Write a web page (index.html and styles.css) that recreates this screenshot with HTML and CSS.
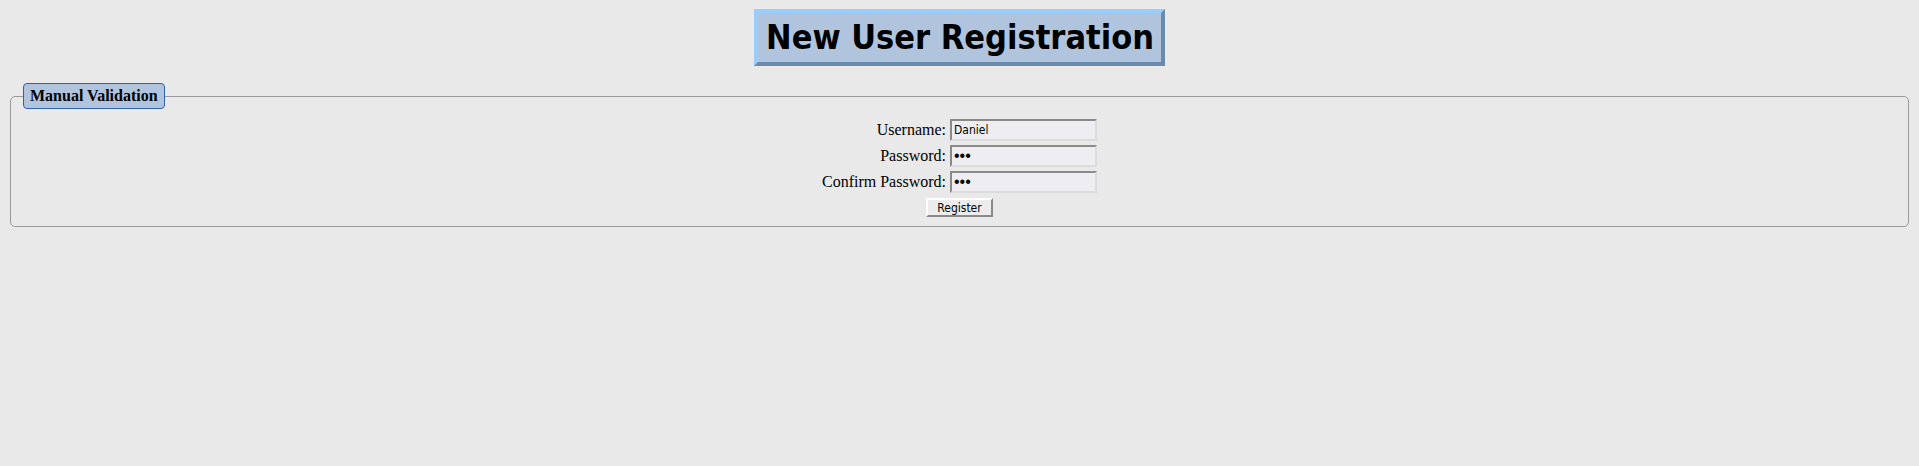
FILE: index.html
```html
<!DOCTYPE html>
<html>
<head>
<meta charset="utf-8">
<title>New User Registration</title>
<link rel="stylesheet" href="styles.css">
</head>
<body>
<div class="title-wrap">
  <h1 class="title">New User Registration</h1>
</div>
<fieldset class="panel">
  <legend class="panel-legend">Manual Validation</legend>
  <table class="form-table">
    <tr>
      <td class="label">Username:</td>
      <td><input class="field" type="text" value="Daniel"></td>
    </tr>
    <tr>
      <td class="label">Password:</td>
      <td><input class="field field-pw" type="password" value="abc"></td>
    </tr>
    <tr>
      <td class="label">Confirm Password:</td>
      <td><input class="field field-pw" type="password" value="abc"></td>
    </tr>
  </table>
  <div class="actions">
    <button class="btn" type="button">Register</button>
  </div>
</fieldset>
</body>
</html>
```

FILE: styles.css
```css
html, body {
  background: #e9e9e9;
}
body {
  margin: 8px;
  font-family: "Liberation Serif", "Times New Roman", serif;
  font-size: 16px;
  color: #000;
}
.title-wrap {
  text-align: center;
  padding-top: 1px;
  margin-bottom: 17px;
}
.title {
  display: inline-block;
  margin: 0;
  padding: 3px 7px 4px 8px;
  background: #b0c4de;
  border-style: solid;
  border-width: 4px;
  border-color: #99ccff #6b8bad #6b8bad #99ccff;
  font-family: "DejaVu Sans Condensed", "DejaVu Sans", sans-serif;
  font-stretch: condensed;
  font-weight: bold;
  font-size: 34px;
  line-height: 42px;
  letter-spacing: 0;
}
.panel {
  margin: 0 2px;
  border: 1px solid #9a9a9a;
  border-radius: 5px;
  padding: 1px 10px 9px;
}
.panel-legend {
  background: #b0c4de;
  border: 1px solid #3060b8;
  border-radius: 4px;
  padding: 3px 6px 3px 6px;
  margin-left: 2px;
  font-weight: bold;
  font-size: 16px;
  line-height: 18px;
}
.form-table {
  margin: 6px auto 0;
  border-spacing: 2px;
}
.form-table td {
  padding: 1px;
}
.label {
  text-align: right;
}
.field {
  box-sizing: border-box;
  width: 147px;
  height: 22px;
  margin: 0;
  padding: 1px 2px;
  background: #eeeef2;
  border-style: solid;
  border-width: 2px;
  border-color: #8a8a8a #dcdcdc #dcdcdc #8a8a8a;
  font-family: "DejaVu Sans Condensed", "DejaVu Sans", sans-serif;
  font-stretch: condensed;
  font-size: 12px;
  color: #000;
  outline: none;
}
.field-pw {
  font-family: "Liberation Sans", Arial, sans-serif;
  font-size: 16px;
  letter-spacing: 0;
  padding: 0 2px;
}
.actions {
  text-align: center;
  margin-top: 2px;
  line-height: 0;
}
.btn {
  box-sizing: border-box;
  width: 67px;
  height: 19px;
  margin: 0;
  padding: 0;
  background: #ececec;
  border-style: solid;
  border-width: 2px;
  border-color: #ffffff #8a8a8a #8a8a8a #ffffff;
  font-family: "DejaVu Sans Condensed", "DejaVu Sans", sans-serif;
  font-stretch: condensed;
  font-size: 12px;
  line-height: 14px;
  color: #000;
}
```
